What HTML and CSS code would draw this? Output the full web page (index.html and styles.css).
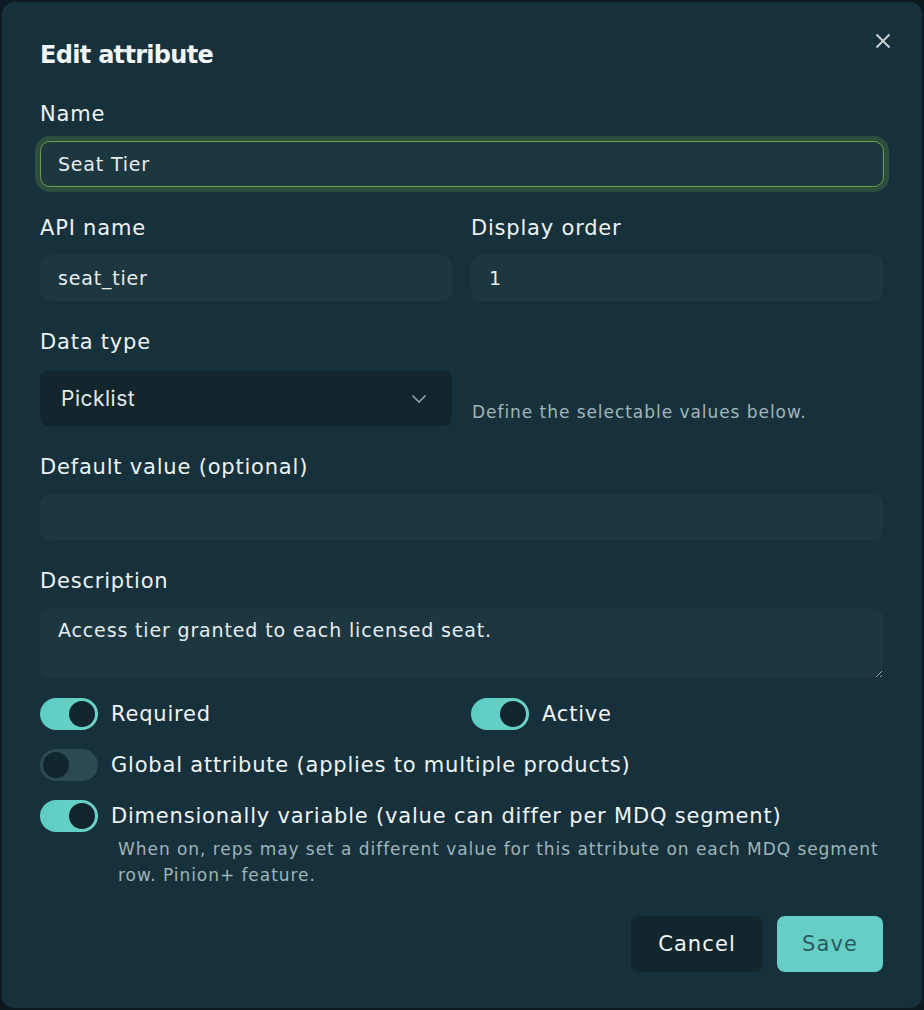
FILE: index.html
```html
<!DOCTYPE html>
<html lang="en">
<head>
<meta charset="utf-8">
<title>Edit attribute</title>
<link rel="stylesheet" href="styles.css">
</head>
<body>
<div class="dialog">
  <button class="close" aria-label="Close">
    <svg width="16" height="16" viewBox="0 0 16 16"><path d="M1.5 1.5 L14.5 14.5 M14.5 1.5 L1.5 14.5" stroke="#c5d0d2" stroke-width="2" fill="none"/></svg>
  </button>
  <h1 class="title">Edit attribute</h1>
  <div class="form">
    <div class="field">
      <label class="label">Name</label>
      <div class="input focus">Seat Tier</div>
    </div>
    <div class="row">
      <div class="field">
        <label class="label">API name</label>
        <div class="input">seat_tier</div>
      </div>
      <div class="field">
        <label class="label">Display order</label>
        <div class="input">1</div>
      </div>
    </div>
    <div class="row">
      <div class="field">
        <label class="label">Data type</label>
        <div class="select">
          <span>Picklist</span>
          <svg width="16" height="10" viewBox="0 0 16 10"><path d="M1.5 1.5 L8 8 L14.5 1.5" stroke="#8da3a8" stroke-width="1.6" fill="none"/></svg>
        </div>
      </div>
      <div class="hint-cell">
        <p class="hint">Define the selectable values below.</p>
      </div>
    </div>
    <div class="field">
      <label class="label">Default value (optional)</label>
      <div class="input"></div>
    </div>
    <div class="field">
      <label class="label">Description</label>
      <textarea class="textarea">Access tier granted to each licensed seat.</textarea>
    </div>
  </div>
  <div class="toggles">
    <div class="toggle-row two">
      <div class="toggle-item"><span class="switch on"><span class="knob"></span></span><span class="tlabel">Required</span></div>
      <div class="toggle-item"><span class="switch on"><span class="knob"></span></span><span class="tlabel">Active</span></div>
    </div>
    <div class="toggle-item"><span class="switch"><span class="knob"></span></span><span class="tlabel">Global attribute (applies to multiple products)</span></div>
    <div class="toggle-group">
      <div class="toggle-item"><span class="switch on"><span class="knob"></span></span><span class="tlabel">Dimensionally variable (value can differ per MDQ segment)</span></div>
      <p class="note">When on, reps may set a different value for this attribute on each MDQ segment row. Pinion+ feature.</p>
    </div>
  </div>
  <div class="actions">
    <button class="btn cancel">Cancel</button>
    <button class="btn save">Save</button>
  </div>
</div>
</body>
</html>
```
FILE: styles.css
```css
* { box-sizing: border-box; }
html, body { margin: 0; padding: 0; }
body {
  background: #0c191e;
  font-family: "DejaVu Sans", "Liberation Sans", sans-serif;
  color: #e9efef;
  width: 924px;
  height: 1010px;
  overflow: hidden;
}
.dialog {
  position: relative;
  margin: 2px;
  width: 920px;
  height: 1006px;
  background: #17313c;
  border-radius: 12px;
  padding: 34px 39px 0 38px;
}
.close {
  position: absolute;
  top: 30px;
  right: 30px;
  width: 18px;
  height: 18px;
  padding: 0;
  border: 0;
  background: none;
  display: flex;
  align-items: center;
  justify-content: center;
}
.title {
  margin: 0;
  font-size: 24px;
  line-height: 38px;
  font-weight: 700;
  color: #f3f6f6;
  letter-spacing: -0.7px;
}
.form {
  margin-top: 26px;
  display: flex;
  flex-direction: column;
  gap: 27px;
}
.field {
  display: flex;
  flex-direction: column;
  gap: 13px;
}
.label {
  font-size: 21px;
  line-height: 28px;
  font-weight: 400;
  color: #edf2f2;
  padding-left: 0;
  letter-spacing: 0.8px;
}
.row {
  display: grid;
  grid-template-columns: 412px 412px;
  column-gap: 19px;
}
.input {
  height: 46px;
  background: #1d3741;
  border-radius: 10px;
  padding: 0 18px;
  display: flex;
  align-items: center;
  font-size: 19px;
  color: #e6eded;
  letter-spacing: 0.8px;
}
.input.focus {
  border: 1.5px solid #6f9b4c;
  box-shadow: 0 0 0 5px #2d4d3d;
  padding-left: 17px;
  margin: 0 -1px 0 0;
}
.select {
  height: 55px;
  margin-top: 2px;
  background: #11262d;
  border-radius: 8px;
  padding: 0 25px 0 21px;
  display: flex;
  align-items: center;
  justify-content: space-between;
  font-family: Inter, "Liberation Sans", sans-serif;
  font-size: 21px;
  letter-spacing: 0.5px;
  color: #e3eaea;
}
.hint-cell {
  display: flex;
  align-items: flex-end;
}
.hint {
  margin: 0 0 2px 1px;
  font-size: 17px;
  line-height: 24px;
  color: #9fb6ba;
  letter-spacing: 0.95px;
}
.textarea {
  display: block;
  width: 100%;
  height: 70px;
  background: #1d3741;
  border: 0;
  border-radius: 10px;
  padding: 9px 18px;
  font-family: "DejaVu Sans", "Liberation Sans", sans-serif;
  font-size: 19px;
  line-height: 26px;
  color: #e6eded;
  resize: vertical;
  letter-spacing: 0.85px;
  outline: none;
}
.toggles {
  margin-top: 20px;
  display: flex;
  flex-direction: column;
  gap: 19px;
}
.toggle-row.two {
  display: grid;
  grid-template-columns: 431px 412px;
}
.toggle-item {
  display: flex;
  align-items: center;
  gap: 13px;
}
.switch {
  width: 58px;
  height: 32px;
  border-radius: 16px;
  background: #2b4a52;
  padding: 3px;
  display: flex;
  justify-content: flex-start;
  flex-shrink: 0;
}
.switch.on {
  background: linear-gradient(90deg, #5ccdc3, #6bd2c7);
  justify-content: flex-end;
}
.knob {
  width: 26px;
  height: 26px;
  border-radius: 50%;
  background: #10262d;
}
.tlabel {
  font-size: 21px;
  line-height: 28px;
  font-weight: 400;
  color: #eef3f3;
  letter-spacing: 0.8px;
}
.toggle-group {
  display: flex;
  flex-direction: column;
}
.note {
  margin: 4px 0 0 78px;
  font-size: 17px;
  line-height: 26px;
  color: #9fb4b8;
  letter-spacing: 0.95px;
}
.actions {
  margin-top: 28px;
  display: flex;
  justify-content: flex-end;
  gap: 14px;
}
.btn {
  height: 56px;
  border: 0;
  border-radius: 8px;
  font-family: "DejaVu Sans", "Liberation Sans", sans-serif;
  font-size: 21px;
  font-weight: 400;
  letter-spacing: 1.1px;
}
.cancel {
  width: 132px;
  background: #11262d;
  color: #f1f5f5;
}
.save {
  width: 106px;
  background: #66cfc5;
  color: #2b5b5f;
}
```
